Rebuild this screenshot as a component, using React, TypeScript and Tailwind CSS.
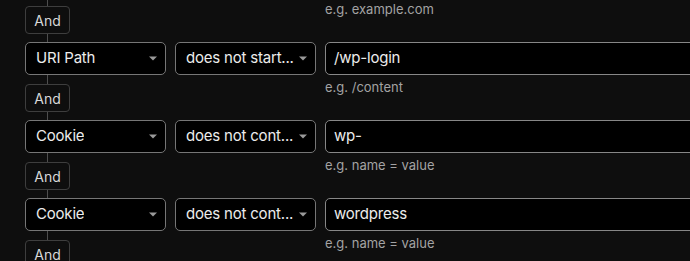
import React from 'react';

const ROWS = [
  { field: 'URI Path', op: 'does not start...', value: '/wp-login', hint: 'e.g. /content' },
  { field: 'Cookie', op: 'does not cont...', value: 'wp-', hint: 'e.g. name = value' },
  { field: 'Cookie', op: 'does not cont...', value: 'wordpress', hint: 'e.g. name = value' },
];

function Caret() {
  return (
    <svg width="8" height="5" viewBox="0 0 8 5" className="shrink-0">
      <path d="M0 0.5 L8 0.5 L4 4.5 Z" fill="#9a9a9a" />
    </svg>
  );
}

function Select({ label }: { label: string }) {
  return (
    <div className="h-[33px] rounded-[5px] border border-[#767676] bg-black pl-[10px] pr-[8px] flex items-center justify-between gap-1">
      <span className="text-[15px] tracking-[-0.2px] text-[#ececec] whitespace-nowrap overflow-hidden">{label}</span>
      <Caret />
    </div>
  );
}

function Connector({ hint }: { hint: string }) {
  return (
    <>
      <div className="col-start-1 h-[45px] w-[45px] flex flex-col items-center">
        <div className="w-px h-[9px] bg-[#4e4e4e]" />
        <div className="w-[45px] h-[28px] rounded-[4px] border border-[#3e3e3e] flex items-center justify-center text-[14px] text-[#d8d8d8]">
          And
        </div>
        <div className="w-px flex-1 bg-[#4e4e4e]" />
      </div>
      <div className="col-start-3 pt-[4px] text-[13px] leading-[16px] text-[#a3a3a3]">{hint}</div>
    </>
  );
}

export default function App() {
  return (
    <div
      className="w-[690px] h-[261px] overflow-hidden bg-[#0e0e0e]"
      style={{ fontFamily: 'Inter, "Noto Sans", sans-serif' }}
    >
      <div className="-mt-[3px] pl-[25px] w-[1000px] grid grid-cols-[141px_141px_1fr] gap-x-[9px]">
        <Connector hint="e.g. example.com" />
        {ROWS.map((r, i) => (
          <React.Fragment key={i}>
            <Select label={r.field} />
            <Select label={r.op} />
            <div className="h-[33px] rounded-[5px] border border-[#878787] bg-black px-[8px] flex items-center text-[15px] tracking-[-0.2px] text-[#ececec]">
              {r.value}
            </div>
            <Connector hint={r.hint} />
          </React.Fragment>
        ))}
      </div>
    </div>
  );
}
